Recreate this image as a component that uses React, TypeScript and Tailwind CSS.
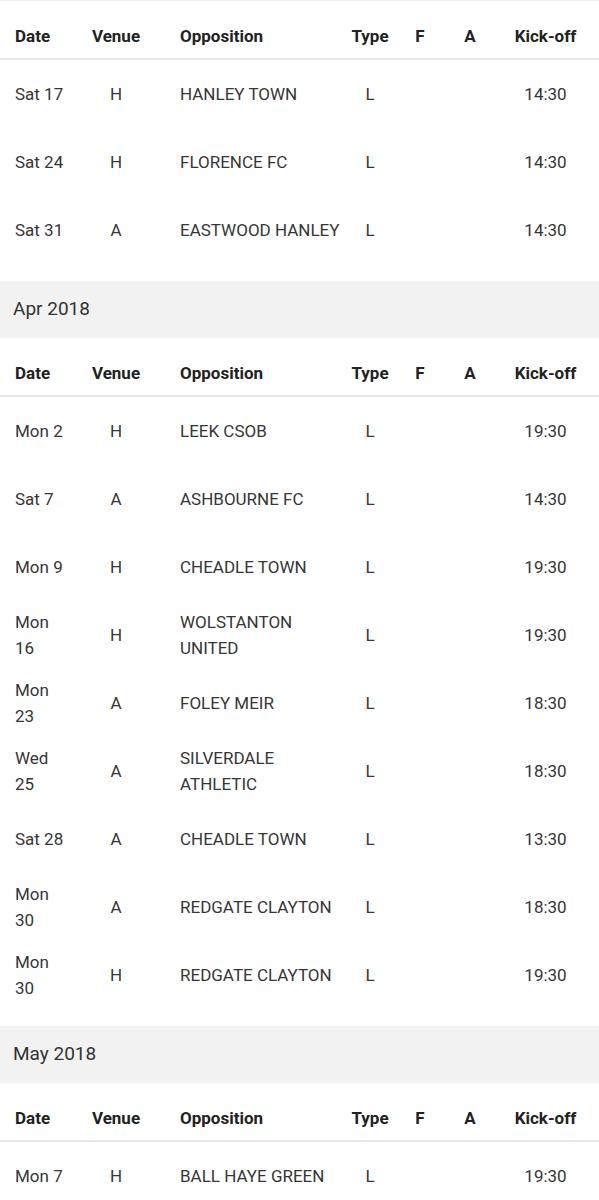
type Fixture = { date: string; venue: string; opp: string; type: string; ko: string };

const MARCH: Fixture[] = [
  { date: "Sat 17", venue: "H", opp: "HANLEY TOWN", type: "L", ko: "14:30" },
  { date: "Sat 24", venue: "H", opp: "FLORENCE FC", type: "L", ko: "14:30" },
  { date: "Sat 31", venue: "A", opp: "EASTWOOD HANLEY", type: "L", ko: "14:30" },
];

const APRIL: Fixture[] = [
  { date: "Mon 2", venue: "H", opp: "LEEK CSOB", type: "L", ko: "19:30" },
  { date: "Sat 7", venue: "A", opp: "ASHBOURNE FC", type: "L", ko: "14:30" },
  { date: "Mon 9", venue: "H", opp: "CHEADLE TOWN", type: "L", ko: "19:30" },
  { date: "Mon 16", venue: "H", opp: "WOLSTANTON UNITED", type: "L", ko: "19:30" },
  { date: "Mon 23", venue: "A", opp: "FOLEY MEIR", type: "L", ko: "18:30" },
  { date: "Wed 25", venue: "A", opp: "SILVERDALE ATHLETIC", type: "L", ko: "18:30" },
  { date: "Sat 28", venue: "A", opp: "CHEADLE TOWN", type: "L", ko: "13:30" },
  { date: "Mon 30", venue: "A", opp: "REDGATE CLAYTON", type: "L", ko: "18:30" },
  { date: "Mon 30", venue: "H", opp: "REDGATE CLAYTON", type: "L", ko: "19:30" },
];

const MAY: Fixture[] = [{ date: "Mon 7", venue: "H", opp: "BALL HAYE GREEN", type: "L", ko: "19:30" }];

const COLS = "grid grid-cols-[80px_72px_196px_44px_56px_44px_1fr] items-center";

function HeaderRow() {
  return (
    <div className={`${COLS} h-[59px] pt-[15px] border-b-2 border-[#e8e8e8] font-bold text-[#222]`}>
      <div className="pl-[15px]">Date</div>
      <div className="text-center">Venue</div>
      <div className="pl-[28px]">Opposition</div>
      <div className="text-center">Type</div>
      <div className="text-center">F</div>
      <div className="text-center">A</div>
      <div className="text-center">Kick-off</div>
    </div>
  );
}

function FixtureTable({ rows }: { rows: Fixture[] }) {
  return (
    <div className="mb-[17px]">
      <HeaderRow />
      {rows.map((r, i) => (
        <div key={i} className={`${COLS} h-[68px] text-[#363636] leading-[26px]`}>
          <div className="pl-[15px] pr-[13px]">{r.date}</div>
          <div className="text-center">{r.venue}</div>
          <div className="pl-[28px] pr-[2px]">{r.opp}</div>
          <div className="text-center">{r.type}</div>
          <div className="text-center"></div>
          <div className="text-center"></div>
          <div className="text-center">{r.ko}</div>
        </div>
      ))}
    </div>
  );
}

function MonthBar({ label }: { label: string }) {
  return (
    <div className="h-[57px] bg-[#f2f2f2] flex items-center pl-[13px] text-[19px] text-[#333]">
      {label}
    </div>
  );
}

export default function App() {
  return (
    <div className="w-[599px] bg-white text-[17px] font-['Roboto',sans-serif] border-t border-[#eeeeee]">
      <FixtureTable rows={MARCH} />
      <MonthBar label="Apr 2018" />
      <FixtureTable rows={APRIL} />
      <MonthBar label="May 2018" />
      <FixtureTable rows={MAY} />
    </div>
  );
}
